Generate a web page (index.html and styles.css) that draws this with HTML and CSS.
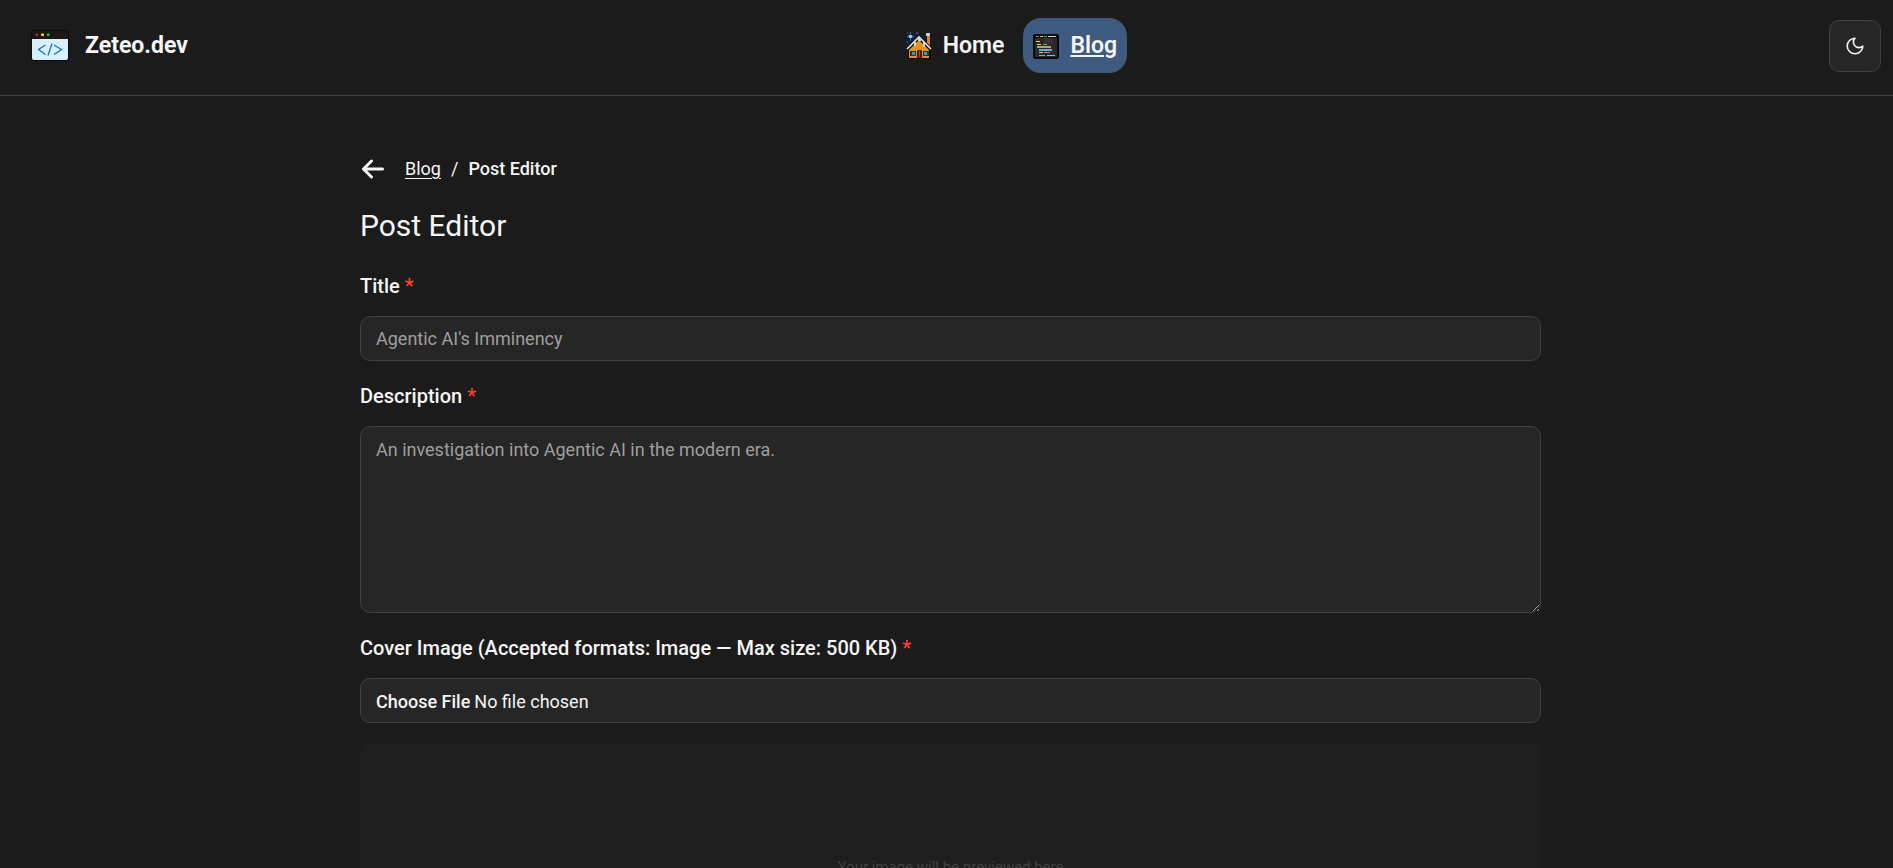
FILE: index.html
```html
<!DOCTYPE html>
<html lang="en">
<head>
<meta charset="utf-8">
<meta name="viewport" content="width=device-width, initial-scale=1">
<title>Post Editor | Zeteo.dev</title>
<link rel="stylesheet" href="styles.css">
</head>
<body>
<header class="site-header">
  <a class="brand" href="#">
    <svg class="brand-icon" viewBox="0 0 38 32" aria-hidden="true">
      <rect width="38" height="31" rx="3" fill="#0b0b0b"/>
      <rect x="1" y="1" width="36" height="8" rx="2" fill="#1d1716"/>
      <path d="M1 9h36v19q0 2-2 2H3q-2 0-2-2z" fill="#d8effc"/>
      <rect x="4.500" y="3.500" width="2.500" height="2.500" rx="1" fill="#e01b1b"/>
      <rect x="10" y="3.500" width="3" height="2.500" rx="1" fill="#f2e51c"/>
      <rect x="16" y="3.500" width="2.500" height="2.500" rx="1" fill="#1be01b"/>
      <path d="M14.500 15L7.500 19.500l7 5M23 15l7.500 4.500-7.500 5M21 13.500l-4 12" fill="none" stroke="#1b6fc0" stroke-width="1.300"/>
    </svg>
    <span>Zeteo.dev</span>
  </a>
  <nav class="nav" aria-label="Main">
    <a class="nav-link" href="#">
      <svg class="nav-icon" viewBox="0 0 26 28" aria-hidden="true">
        <path d="M4 0h1v3l3 1v1L5 6v3H4V6L1 5V4l3-1z" fill="#2b76ba"/>
        <path d="M3 3h3v3H3z" fill="#7cc3f5"/>
        <path d="M10 2l2-2M1 9l1 2M1 1h1M8 8h1" stroke="#285f91" stroke-width="1.500"/>
        <path d="M20 1h5v14l-5-4z" fill="#0c0c0c"/>
        <path d="M21 4h3v10l-3-3z" fill="#e08615"/>
        <path d="M20 1h4v3h-4z" fill="#c9d2db"/>
        <path d="M13 5l12 12v10H2V17z" fill="#101010"/>
        <path d="M13 8l10 10v8H3v-8z" fill="#ec920f"/>
        <path d="M1 17L13 5l12 12" fill="none" stroke="#101010" stroke-width="3"/>
        <path d="M1 17L13 5l12 12" fill="none" stroke="#dfe7ef" stroke-width="1.600"/>
        <path d="M12 6h3v3h-3zM8 10h2v4H8zM17 10h2v5h-2z" fill="#c7d8ea"/>
        <path d="M4 19h6v5H4zM17 19h6v5h-6z" fill="#203648"/>
        <path d="M6 20h3v3H6zM18 20h3v3h-3z" fill="#4694c4"/>
        <path d="M11 26v-7l1-1h3l1 1v7z" fill="#422109"/>
        <path d="M13 19h1v6h-1z" fill="#a45a13"/>
        <path d="M2 26.500h23" stroke="#090909"/>
      </svg>
      <span>Home</span>
    </a>
    <a class="nav-link nav-link-active" href="#" aria-current="page">
      <svg class="nav-icon" viewBox="0 0 26 28" aria-hidden="true">
        <rect y="2" width="26" height="25" rx="2" fill="#0c0c0c"/>
        <path d="M2 6h22v19H2z" fill="#292929"/>
        <path d="M11 6h8v6h-8z" fill="#333"/>
        <path d="M3 4.500h3" stroke="#f05d64"/>
        <path d="M7 4.500h3" stroke="#ffb44b"/>
        <path d="M11 4.500h3" stroke="#18bd4d"/>
        <path d="M15 4.500h8" stroke="#d4d4d4"/>
        <path d="M3 9.500h4M4 12.500h4M6 20.500h4" stroke="#f9ca62"/>
        <path d="M10 12.500h4M11 20.500h6" stroke="#e4737e"/>
        <path d="M4 15h14" stroke="#82bd77" stroke-width="2"/>
        <path d="M6 18h13" stroke="#62a8eb" stroke-width="2"/>
        <path d="M6 23.500h6" stroke="#62a8eb"/>
        <path d="M14 23.500h8" stroke="#67c8ca"/>
      </svg>
      <span class="nav-text">Blog</span>
    </a>
  </nav>
  <button class="theme-button" type="button" aria-label="Toggle theme">
    <svg class="theme-icon" viewBox="0 0 18 18" aria-hidden="true">
      <path d="M9 1.200A5.200 5.200 0 0 0 16.800 9 7.800 7.800 0 1 1 9 1.200z" fill="none" stroke="currentColor" stroke-width="1.600" stroke-linejoin="round"/>
    </svg>
  </button>
</header>
<main class="page">
  <div class="editor">
    <nav class="breadcrumb" aria-label="Breadcrumb">
      <a class="back" href="#" aria-label="Back">
        <svg class="back-icon" viewBox="0 0 24 20" aria-hidden="true">
          <path d="M11 2L3 10l8 8M3 10h19" fill="none" stroke="currentColor" stroke-width="3" stroke-linecap="round" stroke-linejoin="round"/>
        </svg>
      </a>
      <a class="crumb-link" href="#">Blog</a>
      <span>/</span>
      <span class="crumb-current">Post Editor</span>
    </nav>
    <h1 class="heading">Post Editor</h1>
    <form class="form">
      <div class="field">
        <label class="label" for="title">Title <span class="required">*</span></label>
        <input class="control" id="title" type="text" placeholder="Agentic AI's Imminency">
      </div>
      <div class="field">
        <label class="label" for="description">Description <span class="required">*</span></label>
        <textarea class="control control-area" id="description" placeholder="An investigation into Agentic AI in the modern era."></textarea>
      </div>
      <div class="field">
        <label class="label" for="cover">Cover Image (Accepted formats: Image — Max size: 500 KB) <span class="required">*</span></label>
        <input class="control control-file" id="cover" type="file" accept="image/*">
      </div>
      <div class="preview">Your image will be previewed here</div>
    </form>
  </div>
</main>
</body>
</html>
```
FILE: styles.css
```css
* {
  box-sizing: border-box;
}

body {
  margin: 0;
  background: #1b1b1b;
  color: #f5f5f5;
  font-family: Roboto, "Liberation Sans", sans-serif;
  font-size: 18px;
  line-height: 27px;
}

a {
  color: inherit;
  text-decoration: none;
}

svg {
  display: block;
  flex: none;
}

.site-header {
  display: flex;
  align-items: center;
  justify-content: space-between;
  padding: 18px 12px 22px;
  border-bottom: 1px solid #404040;
}

.brand {
  display: flex;
  align-items: center;
  gap: 16px;
  padding: 0 6px 0 19px;
  font-size: 23px;
  font-weight: 700;
}

.brand-icon {
  width: 38px;
  height: 32px;
}

.nav {
  display: flex;
  gap: 9px;
}

.nav-link {
  display: flex;
  align-items: center;
  gap: 11px;
  height: 55px;
  padding: 0 10px;
  border-radius: 18px;
  font-size: 23px;
  font-weight: 600;
}

.nav-link-active {
  background: #3f5a7f;
}

.nav-text {
  text-decoration: underline;
  text-decoration-thickness: 2px;
  text-underline-offset: 2px;
}

.nav-icon {
  width: 26px;
  height: 28px;
}

.theme-button {
  display: grid;
  place-items: center;
  width: 52px;
  height: 52px;
  padding: 0;
  border: 1px solid #404040;
  border-radius: 10px;
  background: #262626;
  color: #f5f5f5;
}

.theme-icon {
  width: 18px;
  height: 18px;
}

.page {
  padding: 59px 16px 40px 24px;
}

.editor {
  max-width: 1181px;
  margin: 0 auto;
}

.breadcrumb {
  display: flex;
  align-items: center;
  gap: 10px;
}

.back {
  padding-right: 10px;
}

.back-icon {
  width: 25px;
  height: 20px;
}

.crumb-link {
  text-decoration: underline;
  text-underline-offset: 3px;
}

.crumb-current {
  font-weight: 500;
}

.heading {
  margin: 21px 0 23px;
  font-size: 30px;
  font-weight: 400;
  line-height: 45px;
}

.form {
  display: grid;
  gap: 20px;
}

.field {
  display: grid;
  gap: 15px;
}

.label {
  font-size: 20px;
  font-weight: 500;
  line-height: 30px;
}

.required {
  color: #ff3b30;
}

.control {
  width: 100%;
  height: 45px;
  padding: 8px 15px;
  border: 1px solid #404040;
  border-radius: 10px;
  background: #262626;
  color: #f5f5f5;
  font: inherit;
}

.control::placeholder {
  color: #9f9f9f;
  opacity: 1;
}

.control-area {
  display: block;
  height: 187px;
  padding-top: 9px;
  resize: vertical;
}

.control-file {
  padding-top: 9px;
}

.control-file::file-selector-button {
  margin: 0 4px 0 0;
  padding: 0;
  border: 0;
  background: none;
  color: inherit;
  font: inherit;
  font-weight: 500;
}

.preview {
  display: grid;
  place-items: center;
  min-height: 248px;
  border-radius: 10px;
  background: #1e1e1e;
  color: #414141;
  font-size: 15px;
}
```
